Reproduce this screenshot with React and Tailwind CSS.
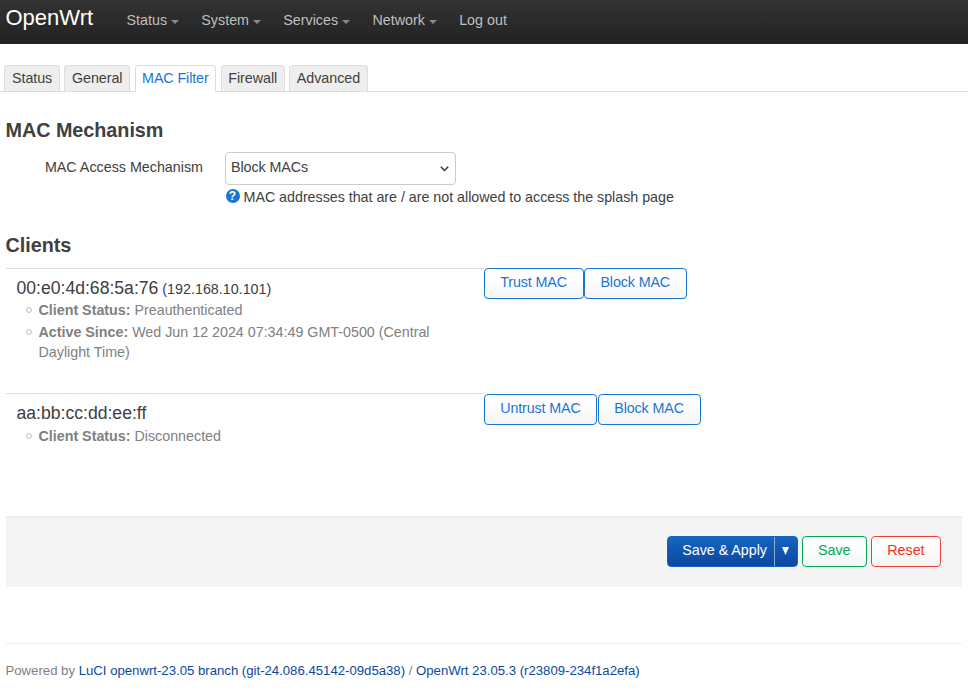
const menu = ['Status', 'System', 'Services', 'Network'];
const tabs = ['Status', 'General', 'MAC Filter', 'Firewall', 'Advanced'];

const clients = [
  {
    mac: '00:e0:4d:68:5a:76',
    ip: '(192.168.10.101)',
    details: [
      ['Client Status:', 'Preauthenticated'],
      ['Active Since:', 'Wed Jun 12 2024 07:34:49 GMT-0500 (Central Daylight Time)'],
    ],
    actions: ['Trust MAC', 'Block MAC'],
  },
  {
    mac: 'aa:bb:cc:dd:ee:ff',
    ip: '',
    details: [['Client Status:', 'Disconnected']],
    actions: ['Untrust MAC', 'Block MAC'],
  },
];

function Button({ children, className }) {
  return (
    <button
      className={`h-[31px] rounded-[4px] border bg-linear-to-b from-white from-25% to-[#f5f5f5] pb-[3px] leading-[26px] whitespace-nowrap ${className}`}
    >
      {children}
    </button>
  );
}

function Header() {
  return (
    <header className="flex h-[44px] items-start bg-linear-to-b from-[#333] to-[#222] pl-[5.5px] tracking-normal">
      <a className="w-[121px] pt-[4px] text-[22px] leading-[27px] text-white">OpenWrt</a>
      <nav className="flex gap-[22.3px] pt-[10px] leading-[20px] text-[#bfbfbf]">
        {menu.map((item) => (
          <a key={item} className="flex items-center">
            {item}
            <svg className="mt-[4px] ml-[4px] h-[4px] w-[8px]" viewBox="0 0 8 4">
              <path d="M0 0h8L4 4z" fill="#8a8a8a" />
            </svg>
          </a>
        ))}
        <a>Log out</a>
      </nav>
    </header>
  );
}

function Tabs() {
  return (
    <ul className="mt-[21px] flex h-[27px] gap-[4.5px] border-b border-[#ddd] pl-[4.4px] tracking-[-0.05px]">
      {tabs.map((tab) => (
        <li
          key={tab}
          className={`rounded-t-[4px] border border-[#ddd] px-[6.6px] leading-[25px] whitespace-nowrap ${
            tab === 'MAC Filter'
              ? 'h-[27px] border-b-white bg-white tracking-[-0.1px] text-[#1976d2]'
              : 'h-[26px] border-b-0 bg-[#eee]'
          }`}
        >
          {tab}
        </li>
      ))}
    </ul>
  );
}

function Client({ mac, ip, details, actions, last }) {
  return (
    <div className="flex h-[125px]">
      <div className="w-[478px] border-t border-[#ddd] pt-[8px] pl-[11px] tracking-normal">
        <div className={`leading-[22px] ${last ? 'h-[24px]' : 'h-[23px]'}`}>
          <span className="text-[17.6px]">{mac}</span> {ip}
        </div>
        <ul className="text-[#808080]">
          {details.map(([label, value]) => (
            <li key={label} className="mb-[2px] flex leading-[20px]">
              <span className="mt-[7px] mr-[7px] ml-[9px] size-[6px] shrink-0 rounded-full border border-[#bfbfbf]" />
              <span className="w-[420px] tracking-[-0.01px]">
                <b>{label}</b> {value}
              </span>
            </li>
          ))}
        </ul>
      </div>
      <div className={`flex gap-[0.2px] tracking-[-0.12px] ${last ? 'pt-[1px]' : ''}`}>
        {actions.map((action) => (
          <Button key={action} className="border-[#1976d2] px-[15.7px] text-[#1976d2]">
            {action}
          </Button>
        ))}
      </div>
    </div>
  );
}

export default function App() {
  return (
    <div className="h-[700px] overflow-hidden bg-white font-['Liberation_Sans',Arial,sans-serif] text-[14.3px] leading-[20px] tracking-[-0.03px] text-[#404040]">
      <Header />
      <Tabs />
      <main className="pr-[6px] pl-[5.5px]">
        <h3 className="mt-[18px] h-[42px] text-[19.8px] leading-[40px] font-bold">MAC Mechanism</h3>
        <div className="flex">
          <label className="mr-[22px] w-[197.5px] pt-[5px] text-right tracking-normal">MAC Access Mechanism</label>
          <div>
            <div className="flex h-[33px] w-[231px] items-center justify-between rounded-[4px] border border-[#ccc] pr-[6px] pb-[2px] pl-[5px]">
              <span className="mt-[-2px] tracking-[-0.07px]">Block MACs</span>
              <svg className="mt-[3px] h-[6px] w-[9px]" viewBox="0 0 9 6" fill="none">
                <path d="M0.8 0.8L4.5 4.5L8.2 0.8" stroke="#333" strokeWidth="1.5" />
              </svg>
            </div>
            <div className="mt-[2px] flex items-center pl-[0.5px]">
              <span className="mt-[-3px] mr-[4px] flex size-[14px] items-center justify-center rounded-full bg-[#1976d2] text-[12px] leading-[14px] font-bold text-white">
                ?
              </span>
              MAC addresses that are / are not allowed to access the splash page
            </div>
          </div>
        </div>

        <h3 className="mt-[18px] h-[43px] text-[19.8px] leading-[40px] font-bold">Clients</h3>
        {clients.map((client, i) => (
          <Client key={client.mac} {...client} last={i === clients.length - 1} />
        ))}

        <div className="mt-[-2px] flex h-[71px] justify-end gap-[4.4px] rounded-b-[3px] border-t-2 border-[#eee] bg-[#f4f4f4] pt-[18px] pr-[21.5px]">
          <div className="mr-[-0.6px] flex h-[31px] rounded-[4px] border border-[#1565c0] bg-linear-to-b from-[#1565c0] to-[#0d47a1] text-white">
            <span className="w-[107px] border-r border-[#8eabd8] pl-[14.4px] leading-[26px]">Save &amp; Apply</span>
            <span className="flex w-[22px] justify-center pt-[10px]">
              <svg className="h-[8px] w-[7px]" viewBox="0 0 7 8">
                <path d="M0 0h7L3.5 8z" fill="#fff" />
              </svg>
            </span>
          </div>
          <Button className="border-[#00a854] px-[15.4px] text-[#00a854]">Save</Button>
          <Button className="border-[#f04134] px-[15px] text-[#f5301e]">Reset</Button>
        </div>

        <footer className="mt-[56px] border-t border-[#eee] pt-[17px] text-[13.2px] leading-[20px] tracking-[-0.012px] text-[#808080]">
          Powered by <a className="text-[#0d47a1]">LuCI openwrt-23.05 branch (git-24.086.45142-09d5a38)</a> /{' '}
          <a className="text-[#0d47a1]">OpenWrt 23.05.3 (r23809-234f1a2efa)</a>
        </footer>
      </main>
    </div>
  );
}
